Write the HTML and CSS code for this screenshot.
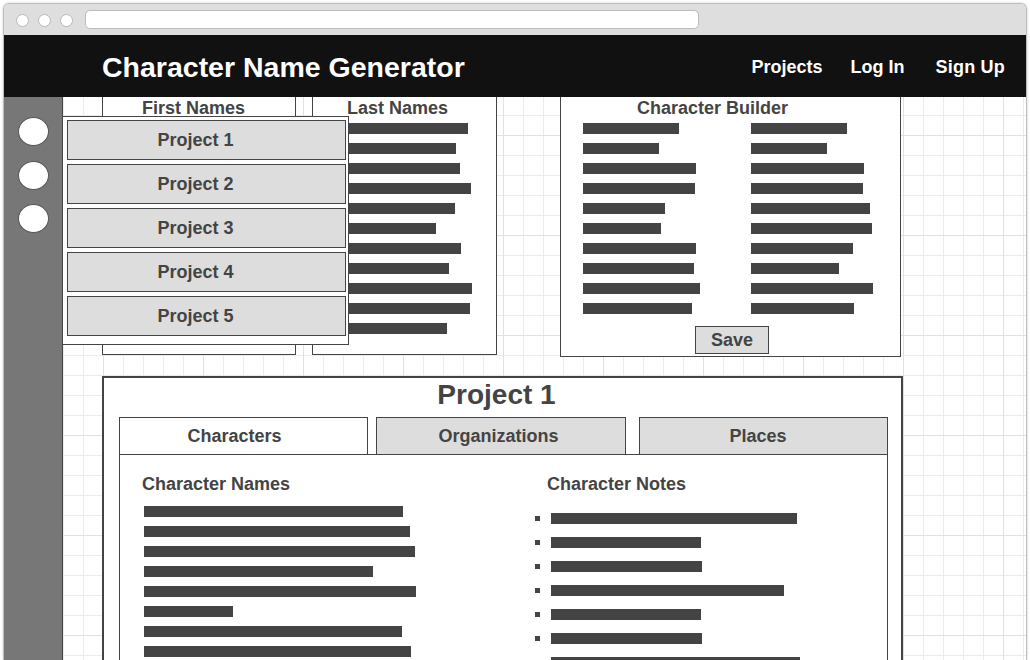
FILE: index.html
```html
<!DOCTYPE html>
<html lang="en">
<head>
<meta charset="utf-8">
<title>Character Name Generator</title>
<link rel="stylesheet" href="styles.css">
</head>
<body>
<div class="window">
  <div class="chrome">
    <span class="dot"></span><span class="dot"></span><span class="dot"></span>
    <div class="address"></div>
  </div>
  <header class="topbar">
    <h1 class="brand">Character Name Generator</h1>
    <nav class="nav"><a class="nav-link">Projects</a><a class="nav-link login">Log In</a><a class="nav-link signup">Sign Up</a></nav>
  </header>
  <div class="main">
    <aside class="sidebar">
      <span class="circle"></span><span class="circle"></span><span class="circle"></span>
    </aside>
    <div class="canvas">
      <div class="top-row">
        <section class="panel first">
          <h2 class="panel-title">First Names</h2>
        </section>
        <section class="panel last">
          <h2 class="panel-title">Last Names</h2>
          <div class="bar-list last-bars">
            <i class="bar" style="width:138px"></i>
            <i class="bar" style="width:126px"></i>
            <i class="bar" style="width:130px"></i>
            <i class="bar" style="width:141px"></i>
            <i class="bar" style="width:125px"></i>
            <i class="bar" style="width:106px"></i>
            <i class="bar" style="width:131px"></i>
            <i class="bar" style="width:119px"></i>
            <i class="bar" style="width:142px"></i>
            <i class="bar" style="width:140px"></i>
            <i class="bar" style="width:117px"></i>
          </div>
        </section>
        <section class="panel builder">
          <h2 class="panel-title">Character Builder</h2>
          <div class="builder-grid">
            <i class="bar" style="width:96px"></i><i class="bar" style="width:96px"></i>
            <i class="bar" style="width:76px"></i><i class="bar" style="width:76px"></i>
            <i class="bar" style="width:113px"></i><i class="bar" style="width:113px"></i>
            <i class="bar" style="width:112px"></i><i class="bar" style="width:112px"></i>
            <i class="bar" style="width:82px"></i><i class="bar" style="width:119px"></i>
            <i class="bar" style="width:78px"></i><i class="bar" style="width:121px"></i>
            <i class="bar" style="width:113px"></i><i class="bar" style="width:102px"></i>
            <i class="bar" style="width:111px"></i><i class="bar" style="width:88px"></i>
            <i class="bar" style="width:117px"></i><i class="bar" style="width:122px"></i>
            <i class="bar" style="width:109px"></i><i class="bar" style="width:103px"></i>
          </div>
          <button class="save">Save</button>
        </section>
      </div>
      <section class="project">
        <h2 class="project-title">Project 1</h2>
        <div class="tabs">
          <div class="tab active">Characters</div>
          <div class="tab second">Organizations</div>
          <div class="tab third">Places</div>
        </div>
        <div class="tab-body">
          <div class="col names-col">
            <h3 class="col-title">Character Names</h3>
            <div class="bar-list names-bars">
              <i class="bar" style="width:259px"></i>
              <i class="bar" style="width:266px"></i>
              <i class="bar" style="width:271px"></i>
              <i class="bar" style="width:229px"></i>
              <i class="bar" style="width:272px"></i>
              <i class="bar" style="width:89px"></i>
              <i class="bar" style="width:258px"></i>
              <i class="bar" style="width:267px"></i>
              <i class="bar" style="width:250px"></i>
            </div>
          </div>
          <div class="col notes-col">
            <h3 class="col-title">Character Notes</h3>
            <ul class="notes">
              <li><i class="bar" style="width:246px"></i></li>
              <li><i class="bar" style="width:150px"></i></li>
              <li><i class="bar" style="width:151px"></i></li>
              <li><i class="bar" style="width:233px"></i></li>
              <li><i class="bar" style="width:150px"></i></li>
              <li><i class="bar" style="width:151px"></i></li>
              <li><i class="bar" style="width:249px"></i></li>
              <li><i class="bar" style="width:200px"></i></li>
            </ul>
          </div>
        </div>
      </section>
    </div>
    <div class="dropdown">
      <div class="dropdown-item">Project 1</div>
      <div class="dropdown-item">Project 2</div>
      <div class="dropdown-item">Project 3</div>
      <div class="dropdown-item">Project 4</div>
      <div class="dropdown-item">Project 5</div>
    </div>
  </div>
</div>
</body>
</html>
```

FILE: styles.css
```css
* {
  box-sizing: border-box;
  margin: 0;
  padding: 0;
}

html, body {
  height: 660px;
  overflow: hidden;
}

body {
  background: #ffffff;
  font-family: "Liberation Sans", Arial, Helvetica, sans-serif;
  color: #444444;
}

.window {
  margin: 3px 0 0 3px;
  width: 1024px;
  height: 657px;
  border: 1px solid #bdbdbd;
  border-bottom: none;
  border-radius: 6px 6px 0 0;
  overflow: hidden;
  background: #ffffff;
  display: flex;
  flex-direction: column;
  box-shadow: 0 0 3px rgba(0, 0, 0, 0.18);
}

/* browser chrome */
.chrome {
  height: 31px;
  flex-shrink: 0;
  background: #dedede;
  display: flex;
  align-items: flex-start;
  padding-left: 12px;
}

.dot {
  width: 13px;
  height: 13px;
  margin-top: 10px;
  margin-right: 9px;
  border-radius: 50%;
  background: #ffffff;
  border: 1px solid #b8b8b8;
}

.address {
  margin-left: 3px;
  margin-top: 6px;
  width: 614px;
  height: 19px;
  border-radius: 5px;
  background: #ffffff;
  border: 1px solid #bcbcbc;
}

/* header */
.topbar {
  height: 62px;
  flex-shrink: 0;
  background: #111111;
  color: #ffffff;
  display: flex;
  align-items: center;
  justify-content: space-between;
  padding: 0 21px 0 98px;
}

.brand {
  font-size: 28.5px;
  line-height: 32px;
  font-weight: bold;
  padding-top: 1px;
}

.nav {
  display: flex;
  font-size: 18px;
  line-height: 22px;
  font-weight: bold;
  padding-top: 2px;
}

.nav-link.login { margin-left: 28px; }
.nav-link.signup { margin-left: 31px; letter-spacing: 0.2px; }

/* main area */
.main {
  flex: 1;
  min-height: 0;
  display: flex;
  position: relative;
}

.sidebar {
  width: 59px;
  flex-shrink: 0;
  background: #777777;
  border-right: 1px solid #444444;
  display: flex;
  flex-direction: column;
  align-items: center;
  padding-top: 20px;
  gap: 14.5px;
}

.circle {
  width: 31px;
  height: 29px;
  border-radius: 50%;
  background: #ffffff;
  border: 1px solid #555555;
}

.canvas {
  flex: 1;
  overflow: hidden;
  padding-left: 39px;
  background-color: #ffffff;
  background-image:
    linear-gradient(to right, #e1e1e1 1px, transparent 1px),
    linear-gradient(to bottom, #e1e1e1 1px, transparent 1px),
    linear-gradient(to right, #ececec 1px, transparent 1px),
    linear-gradient(to bottom, #ececec 1px, transparent 1px);
  background-size: 100px 100px, 100px 100px, 20px 20px, 20px 20px;
  background-position: 40px 0, 0 38px, 0 0, 0 18px;
}

.top-row {
  display: flex;
  align-items: flex-start;
}

.panel {
  background: #ffffff;
  border: 1px solid #444444;
  border-top: none;
}

.panel.first {
  width: 194px;
  height: 258px;
}

.panel.last {
  width: 185px;
  height: 258px;
  margin-left: 16px;
}

.panel.builder {
  width: 341px;
  height: 260px;
  margin-left: 63px;
}

.panel-title {
  font-size: 18px;
  line-height: 20px;
  font-weight: bold;
  color: #444444;
  white-space: nowrap;
  padding-top: 1px;
}

.first .panel-title { padding-left: 39px; }
.last .panel-title { padding-left: 34px; }
.builder .panel-title { padding-left: 76px; }

.bar {
  display: block;
  height: 11px;
  background: #444444;
}

.bar-list {
  display: flex;
  flex-direction: column;
  gap: 9px;
}

.last-bars {
  margin-top: 5px;
  margin-left: 17px;
}

.builder-grid {
  margin-top: 5px;
  padding-left: 22px;
  display: grid;
  grid-template-columns: 168px 1fr;
  row-gap: 9px;
}

.save {
  display: block;
  margin: 12px 0 0 134px;
  width: 74px;
  height: 28px;
  background: #dddddd;
  border: 1px solid #444444;
  font-family: inherit;
  font-size: 18px;
  font-weight: bold;
  color: #444444;
  line-height: 26px;
}

/* project panel */
.project {
  margin-top: 19px;
  width: 801px;
  height: 320px;
  border: 2px solid #444444;
  border-bottom: none;
  background: #ffffff;
  padding-top: 1px;
}

.project-title {
  font-size: 28px;
  line-height: 32px;
  font-weight: bold;
  text-align: center;
  padding-right: 12px;
  color: #444444;
}

.tabs {
  display: flex;
  margin: 6px 0 0 15px;
}

.tab {
  width: 249px;
  height: 37px;
  border: 1px solid #444444;
  border-bottom: none;
  background: #dddddd;
  font-size: 18px;
  font-weight: bold;
  line-height: 36px;
  text-align: center;
  color: #444444;
}

.tab.active {
  background: #ffffff;
  padding-right: 18px;
}

.tab.second {
  width: 250px;
  margin-left: 8px;
  padding-right: 5px;
}

.tab.third {
  margin-left: 13px;
  padding-right: 11px;
}

.tab-body {
  margin-left: 15px;
  width: 769px;
  height: 300px;
  border: 1px solid #444444;
  padding-top: 19px;
  display: grid;
  grid-template-columns: 410px 1fr;
  align-items: start;
}

.col-title {
  font-size: 18px;
  line-height: 20px;
  font-weight: bold;
  color: #444444;
}

.names-col .col-title { margin-left: 22px; }
.notes-col .col-title { margin-left: 17px; }

.names-bars {
  margin-top: 12px;
  margin-left: 24px;
}

.notes {
  list-style: none;
  margin-top: 19px;
  margin-left: 5px;
  display: flex;
  flex-direction: column;
  gap: 13px;
}

.notes li {
  display: flex;
  align-items: center;
  gap: 11px;
}

.notes li::before {
  content: "";
  width: 5px;
  height: 5px;
  background: #444444;
  flex-shrink: 0;
}

/* projects dropdown menu */
.dropdown {
  position: absolute;
  left: 58px;
  top: 19px;
  width: 287px;
  background: #ffffff;
  border: 1px solid #444444;
  padding: 3px 2px 8px 4px;
  display: flex;
  flex-direction: column;
  gap: 4px;
}

.dropdown-item {
  height: 40px;
  background: #dddddd;
  border: 1px solid #444444;
  font-size: 18px;
  font-weight: bold;
  color: #444444;
  display: flex;
  align-items: center;
  justify-content: center;
  padding-right: 22px;
  padding-top: 1px;
}
```
